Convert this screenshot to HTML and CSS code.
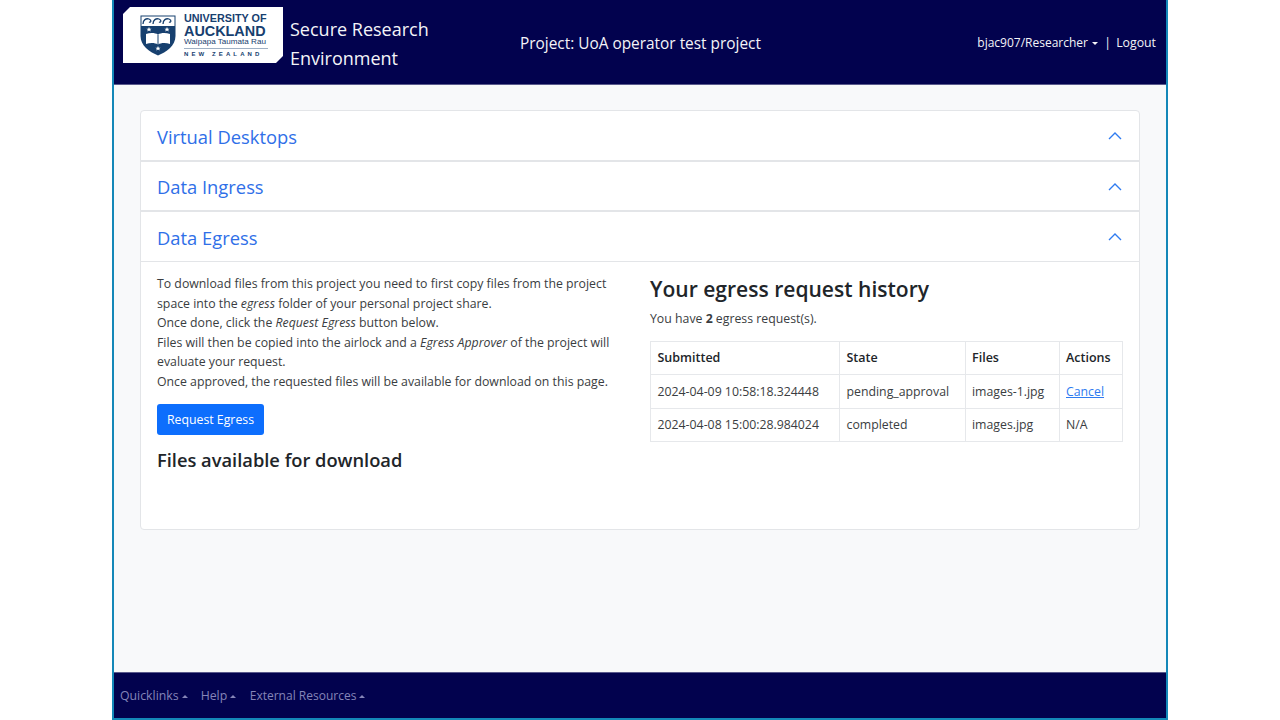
FILE: index.html
```html
<!DOCTYPE html>
<html lang="en">

<head>
    <meta charset="UTF-8">
    <meta name="viewport" content="width=device-width, initial-scale=1.0">
    <title>Secure Research Environment</title>
    <link rel="stylesheet" href="styles.css">
</head>

<body>
    <div class="frame">
        <header class="topbar">
            <div class="logo">
                <svg class="crest" width="36" height="41" viewBox="0 0 36 41">
                    <path d="M0.5 0.5H35.5V21C35.5 31 26 37 18 40.5C10 37 0.5 31 0.5 21Z" fill="#17406f" />
                    <rect x="1.500" y="1.500" width="33" height="9.500" fill="#fff" />
                    <path d="M3 9c0-4 3-6 6-5s2 4 0 3M13 9c0-4 3-6 6-5s2 4 0 3M23 9c0-4 3-6 6-5s2 4 0 3" fill="none" stroke="#17406f" stroke-width="1.300" />
                    <path d="M9 12l.8 1.700h1.800l-1.400 1.100.5 1.800L9 15.600l-1.700 1 .5-1.800-1.400-1.100h1.800zM27 12l.8 1.700h1.800l-1.400 1.100.5 1.800-1.700-1-1.700 1 .5-1.800-1.400-1.100h1.800zM18 31l.8 1.700h1.800l-1.400 1.100.5 1.800-1.700-1-1.700 1 .5-1.800-1.400-1.100h1.800z" fill="#fff" />
                    <path d="M6 19c4-1.500 9-1.500 12 .5c3-2 8-2 12-.5V29c-4-1.500-9-1.500-12 .5c-3-2-8-2-12-.5Z" fill="#fff" />
                    <path d="M18 19.500V29.500" stroke="#17406f" stroke-width="1" />
                </svg>
                <div class="logo-text">
                    <div class="logo-uni">UNIVERSITY OF</div>
                    <div class="logo-auck">AUCKLAND</div>
                    <div class="logo-maori">Waipapa Taumata Rau</div>
                    <div class="logo-nz">NEW ZEALAND</div>
                </div>
            </div>
            <div class="app-title">Secure Research<br>Environment</div>
            <div class="project">Project: UoA operator test project</div>
            <div class="user">
                <span class="user-name">bjac907/Researcher</span><i class="caret"></i>
                <span class="sep">|</span>
                <span>Logout</span>
            </div>
        </header>

        <main class="content">
            <div class="accordion">
                <div class="acc-head acc-first">
                    <span>Virtual Desktops</span>
                    <svg class="chev" width="16" height="16" viewBox="0 0 16 16"><path d="M2 11l6-6 6 6" /></svg>
                </div>
                <div class="acc-head">
                    <span>Data Ingress</span>
                    <svg class="chev" width="16" height="16" viewBox="0 0 16 16"><path d="M2 11l6-6 6 6" /></svg>
                </div>
                <div class="acc-head acc-open">
                    <span>Data Egress</span>
                    <svg class="chev" width="16" height="16" viewBox="0 0 16 16"><path d="M2 11l6-6 6 6" /></svg>
                </div>
                <div class="acc-body">
                    <div class="col-left">
                        <p class="intro">
                            To download files from this project you need to first copy files from the project
                            space into the <em>egress</em> folder of your personal project share.<br>
                            Once done, click the <em>Request Egress</em> button below.<br>
                            Files will then be copied into the airlock and a <em>Egress Approver</em> of the project will
                            evaluate your request.<br>
                            Once approved, the requested files will be available for download on this page.
                        </p>
                        <button class="btn">Request Egress</button>
                        <h3>Files available for download</h3>
                    </div>
                    <div class="col-right">
                        <h2>Your egress request history</h2>
                        <p class="count">You have <b>2</b> egress request(s).</p>
                        <table>
                            <tr>
                                <th class="c1">Submitted</th>
                                <th class="c2">State</th>
                                <th class="c3">Files</th>
                                <th>Actions</th>
                            </tr>
                            <tr>
                                <td>2024-04-09 10:58:18.324448</td>
                                <td>pending_approval</td>
                                <td>images-1.jpg</td>
                                <td><a href="#">Cancel</a></td>
                            </tr>
                            <tr>
                                <td>2024-04-08 15:00:28.984024</td>
                                <td>completed</td>
                                <td>images.jpg</td>
                                <td>N/A</td>
                            </tr>
                        </table>
                    </div>
                </div>
            </div>
        </main>

        <footer class="bottombar">
            <span>Quicklinks<i class="caret"></i></span>
            <span>Help<i class="caret"></i></span>
            <span class="ext">External Resources<i class="caret"></i></span>
        </footer>
    </div>
</body>

</html>
```

FILE: styles.css
```css
* {
    padding: 0;
    margin: 0;
    box-sizing: border-box;
}

body {
    background: #fff;
    font-family: "Open Sans", "Noto Sans", sans-serif;
    font-size: 12.3px;
    color: #3a3d41;
}

.frame {
    width: 1056px;
    height: 720px;
    margin: 0 0 0 112px;
    display: flex;
    flex-direction: column;
    border-left: 2px solid #1488b8;
    border-right: 2px solid #1488b8;
    border-bottom: 2px solid #1488b8;
}

.topbar {
    height: 85px;
    background: #02024e;
    color: #f4f4f8;
    display: flex;
    align-items: flex-start;
    border-bottom: 1px solid #5a5a8c;
    padding: 7px 10px 0 9px;
}

.logo {
    width: 160px;
    height: 56px;
    background: #fff;
    clip-path: polygon(7px 0, 100% 0, 100% 49px, 153px 100%, 0 100%, 0 7px);
    display: flex;
    align-items: center;
    padding-left: 17px;
    gap: 8px;
    color: #17406f;
}

.crest {
    flex: none;
}

.logo-text {
    width: 84px;
    font-family: "Liberation Sans", sans-serif;
    line-height: 1;
}

.logo-uni {
    font-size: 10.800px;
    font-weight: bold;
    white-space: nowrap;
}

.logo-auck {
    font-size: 14.400px;
    font-weight: bold;
    white-space: nowrap;
}

.logo-maori {
    font-size: 8.100px;
    white-space: nowrap;
    border-bottom: 1px solid #9fb0c4;
    padding-bottom: 2px;
    margin-bottom: 2px;
}

.logo-nz {
    font-size: 6px;
    font-weight: bold;
    letter-spacing: 3.100px;
    white-space: nowrap;
}

.app-title {
    width: 230px;
    margin-left: 7px;
    font-size: 18px;
    line-height: 29px;
    margin-top: 8px;
}

.project {
    flex: 1;
    font-size: 15.400px;
    margin-top: 26px;
}

.user {
    font-size: 12.3px;
    margin-top: 27px;
    white-space: nowrap;
}

.user-name {
    font-size: 12px;
}

.sep {
    margin: 0 2px 0 3px;
}

.caret {
    display: inline-block;
    margin-left: 4px;
    vertical-align: 2px;
    border-top: 3.300px solid currentColor;
    border-left: 3.300px solid transparent;
    border-right: 3.300px solid transparent;
}

.content {
    flex: 1;
    background: #f8f9fa;
    padding: 25px 26px 0;
}

.accordion {
    height: 420px;
    background: #fff;
    border: 1px solid #e3e5e8;
    border-radius: 4px;
    display: flex;
    flex-direction: column;
}

.acc-head {
    height: 50px;
    flex: none;
    display: flex;
    align-items: center;
    justify-content: space-between;
    padding: 1px 16px 0;
    font-size: 18.350px;
    color: #2f6fe8;
    border-bottom: 2px solid #e3e5e8;
}

.acc-first {
    height: 51px;
}

.acc-open {
    border-bottom-width: 1px;
}

.chev path {
    fill: none;
    stroke: #2f7bf0;
    stroke-width: 1.4;
}

.acc-body {
    flex: 1;
    display: flex;
    padding: 12px 16px;
    gap: 17px;
}

.col-left {
    width: 477px;
}

.col-right {
    flex: 1;
}

.intro {
    line-height: 19.500px;
}

.btn {
    display: block;
    margin-top: 13px;
    width: 107px;
    height: 31px;
    background: #0d6efd;
    color: #fff;
    border: none;
    border-radius: 3px;
    font: inherit;
}

h3 {
    margin-top: 12px;
    font-size: 18.300px;
    font-weight: 600;
    color: #212529;
}

h2 {
    margin-top: 1px;
    font-size: 21.050px;
    font-weight: 600;
    color: #212529;
}

.count {
    margin-top: 7px;
}

table {
    width: 473px;
    margin-top: 14px;
    border-collapse: collapse;
}

th,
td {
    height: 33.300px;
    padding: 0 6.500px;
    border: 1px solid #e6e8eb;
    text-align: left;
    white-space: nowrap;
}

th {
    padding-bottom: 1px;
    font-size: 12.500px;
    font-weight: 600;
    color: #212529;
}

.c1 {
    width: 189px;
}

.c2 {
    width: 125.500px;
}

.c3 {
    width: 94px;
}

a {
    color: #2f7bf0;
}

.bottombar {
    height: 46px;
    background: #02024e;
    color: #8585b8;
    display: flex;
    align-items: center;
    gap: 13px;
    padding-left: 6px;
    border-top: 1px solid #5a5a8c;
    font-size: 12.3px;
}

.ext {
    font-size: 12px;
    margin-left: 0.500px;
}

.bottombar .caret {
    margin-left: 3px;
    border-top: none;
    border-bottom: 3.300px solid currentColor;
}
```
